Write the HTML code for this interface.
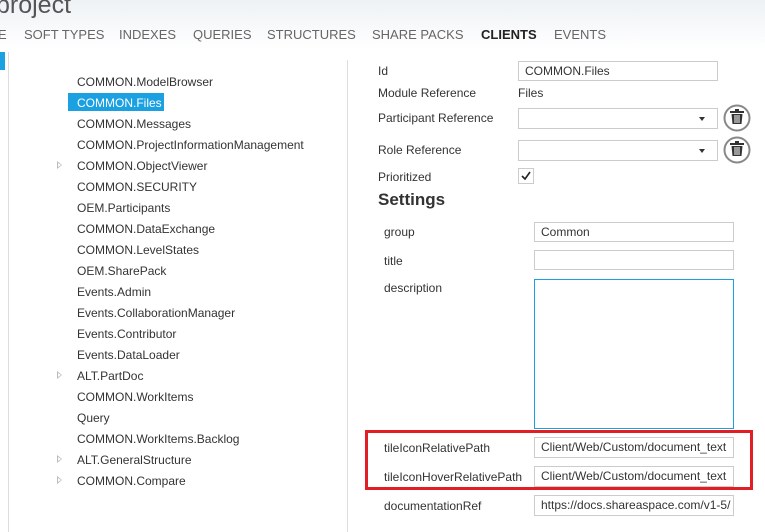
<!DOCTYPE html>
<html><head><meta charset="utf-8"><style>
*{margin:0;padding:0;box-sizing:border-box}
body{width:765px;height:532px;overflow:hidden;background:#fff;font-family:"Liberation Sans",sans-serif;color:#333;position:relative;font-size:12px}
.a{position:absolute;white-space:nowrap}
.hdr{position:absolute;left:0;top:0;width:765px;height:50px;background:linear-gradient(#eef2f5,#fff)}
.t{font-size:25px;color:#555;top:-9px;left:-4px}
.nav{top:27px;font-size:13px;color:#666}
.tree{font-size:12px;color:#333}
.inp{position:absolute;border:1px solid #ccc;height:20px;background:#fff;font-size:12px;padding:2px 6px;color:#333;white-space:nowrap;overflow:hidden}
.tri{position:absolute;width:0;height:0;border-left:5px solid #bbb;border-top:4px solid transparent;border-bottom:4px solid transparent}
.tri:after{content:"";position:absolute;left:-4px;top:-2px;border-left:3px solid #fff;border-top:2px solid transparent;border-bottom:2px solid transparent}
.dd{position:absolute;right:12px;top:8px;border-top:4px solid #333;border-left:3px solid transparent;border-right:3px solid transparent}
</style></head><body>
<div class="hdr"></div>
<div class="a t">project</div>
<div class="a nav" style="left:-2px">E</div>
<div class="a nav" style="left:24px">SOFT TYPES</div>
<div class="a nav" style="left:119px">INDEXES</div>
<div class="a nav" style="left:193px">QUERIES</div>
<div class="a nav" style="left:267px">STRUCTURES</div>
<div class="a nav" style="left:372px">SHARE PACKS</div>
<div class="a nav" style="left:481px;color:#222;font-weight:bold">CLIENTS</div>
<div class="a nav" style="left:554px">EVENTS</div>
<div class="a" style="left:0;top:52px;width:5px;height:18px;background:#1ba1e2"></div>
<div class="a" style="left:8px;top:52px;width:1px;height:480px;background:#ddd"></div>
<div class="a" style="left:347px;top:60px;width:1px;height:472px;background:#ddd"></div>
<div class="a" style="left:68px;top:93px;width:96px;height:18px;background:#1ba1e2"></div>
<div class="a tree" style="left:77px;top:72px;line-height:21px">
COMMON.ModelBrowser<br><span style="color:#fff">COMMON.Files</span><br>COMMON.Messages<br>COMMON.ProjectInformationManagement<br>COMMON.ObjectViewer<br>COMMON.SECURITY<br>OEM.Participants<br>COMMON.DataExchange<br>COMMON.LevelStates<br>OEM.SharePack<br>Events.Admin<br>Events.CollaborationManager<br>Events.Contributor<br>Events.DataLoader<br>ALT.PartDoc<br>COMMON.WorkItems<br>Query<br>COMMON.WorkItems.Backlog<br>ALT.GeneralStructure<br>COMMON.Compare</div>
<div class="tri" style="left:57px;top:161px"></div>
<div class="tri" style="left:57px;top:371px"></div>
<div class="tri" style="left:57px;top:455px"></div>
<div class="tri" style="left:57px;top:476px"></div>

<div class="a" style="left:378px;top:64px">Id</div>
<div class="inp" style="left:518px;top:61px;width:200px">COMMON.Files</div>
<div class="a" style="left:378px;top:86px">Module Reference</div>
<div class="a" style="left:518px;top:86px">Files</div>
<div class="a" style="left:378px;top:111px">Participant Reference</div>
<div class="inp" style="left:518px;top:108px;width:200px;height:21px"><div class="dd"></div></div>
<div class="a" style="left:378px;top:143px">Role Reference</div>
<div class="inp" style="left:518px;top:140px;width:200px;height:21px"><div class="dd"></div></div>
<svg class="a" style="left:723px;top:104px" width="28" height="28" viewBox="0 0 28 28"><circle cx="14" cy="14" r="12.5" fill="#fff" stroke="#888" stroke-width="2"/><rect x="7" y="7" width="14" height="2" fill="#333"/><rect x="12" y="5" width="4" height="2" fill="#333"/><path d="M8.5 10h11l-1 10h-9z" fill="#333"/><path d="M12 11v8M14 11v8M16 11v8" stroke="#fff" stroke-width="1"/></svg>
<svg class="a" style="left:723px;top:136px" width="28" height="28" viewBox="0 0 28 28"><circle cx="14" cy="14" r="12.5" fill="#fff" stroke="#888" stroke-width="2"/><rect x="7" y="7" width="14" height="2" fill="#333"/><rect x="12" y="5" width="4" height="2" fill="#333"/><path d="M8.5 10h11l-1 10h-9z" fill="#333"/><path d="M12 11v8M14 11v8M16 11v8" stroke="#fff" stroke-width="1"/></svg>
<div class="a" style="left:378px;top:170px">Prioritized</div>
<div class="a" style="left:518px;top:168px;width:16px;height:16px;border:1px solid #ccc"></div>
<svg class="a" style="left:519px;top:169px" width="14" height="14"><path d="M3 7l3 3 5-7" stroke="#222" stroke-width="1.6" fill="none"/></svg>
<div class="a" style="left:378px;top:190px;font-size:17px;font-weight:bold;color:#333">Settings</div>
<div class="a" style="left:384px;top:225px">group</div>
<div class="inp" style="left:534px;top:222px;width:200px">Common</div>
<div class="a" style="left:384px;top:254px">title</div>
<div class="inp" style="left:534px;top:250px;width:200px"></div>
<div class="a" style="left:384px;top:281px">description</div>
<div class="inp" style="left:534px;top:279px;width:200px;height:150px;border-color:#1ba1e2"></div>
<div class="a" style="left:365px;top:430px;width:388px;height:60px;border:3px solid #e21d24"></div>
<div class="a" style="left:384px;top:441px">tileIconRelativePath</div>
<div class="inp" style="left:534px;top:437px;width:200px;height:21px">Client/Web/Custom/document_text</div>
<div class="a" style="left:384px;top:470px">tileIconHoverRelativePath</div>
<div class="inp" style="left:534px;top:466px;width:200px;height:21px">Client/Web/Custom/document_text</div>
<div class="a" style="left:384px;top:499px">documentationRef</div>
<div class="inp" style="left:534px;top:495px;width:200px;height:21px">https://docs.shareaspace.com/v1-5/</div>
</body></html>
